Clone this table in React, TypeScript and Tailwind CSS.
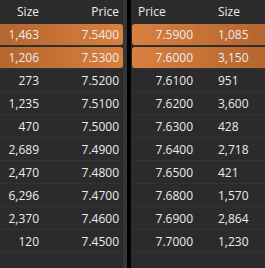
const bids = [
  ["1,463", "7.5400", true],
  ["1,206", "7.5300", true],
  ["273", "7.5200", false],
  ["1,235", "7.5100", false],
  ["470", "7.5000", false],
  ["2,689", "7.4900", false],
  ["2,470", "7.4800", false],
  ["6,296", "7.4700", false],
  ["2,370", "7.4600", false],
  ["120", "7.4500", false]
] as const;

const asks = [
  ["7.5900", "1,085", true],
  ["7.6000", "3,150", true],
  ["7.6100", "951", false],
  ["7.6200", "3,600", false],
  ["7.6300", "428", false],
  ["7.6400", "2,718", false],
  ["7.6500", "421", false],
  ["7.6800", "1,570", false],
  ["7.6900", "2,864", false],
  ["7.7000", "1,230", false]
] as const;

export default function App() {
  return (
    <div
      className="flex h-[268px] w-[265px] overflow-hidden bg-[#2b2b2b] text-[12px] text-[#ececec]"
      style={{ fontFamily: '"Open Sans", "Noto Sans", sans-serif' }}
    >
      <div className="flex w-[127px] shrink-0">
        <div className="w-[123px]">
          <div className="flex h-[23px] items-center">
            <span className="w-[39px] text-right">Size</span>
            <span className="flex-1 pr-[4px] text-right">Price</span>
          </div>
          {bids.map(([size, price, hot]) => (
            <div className="flex h-[23px] flex-col justify-center border-b border-[#333333] pt-[1px]" key={price}>
              <div
                className={
                  hot
                    ? "flex h-full items-center rounded-r-[3px] bg-gradient-to-r from-[#b5652f] to-[#d88040]"
                    : "flex h-full items-center"
                }
              >
                <span className="w-[39px] text-right">{size}</span>
                <span className="flex-1 pr-[4px] text-right">{price}</span>
              </div>
            </div>
          ))}
        </div>
        <div className="w-[4px] bg-[#363636]" />
      </div>
      <div className="w-[4px] shrink-0 bg-black" />
      <div className="flex-1 pl-[1px]">
        <div className="flex h-[23px] items-center">
          <span className="w-[61px] pl-[6px]">Price</span>
          <span className="pl-[25px]">Size</span>
        </div>
        {asks.map(([price, size, hot]) => (
          <div className="flex h-[23px] flex-col justify-center border-b border-[#333333] pt-[1px]" key={price}>
            <div
              className={
                hot
                  ? "flex h-full items-center rounded-l-[3px] bg-gradient-to-r from-[#d88040] to-[#b5652f]"
                  : "flex h-full items-center"
              }
            >
              <span className="w-[61px] text-right">{price}</span>
              <span className="pl-[25px]">{size}</span>
            </div>
          </div>
        ))}
      </div>
    </div>
  );
}
